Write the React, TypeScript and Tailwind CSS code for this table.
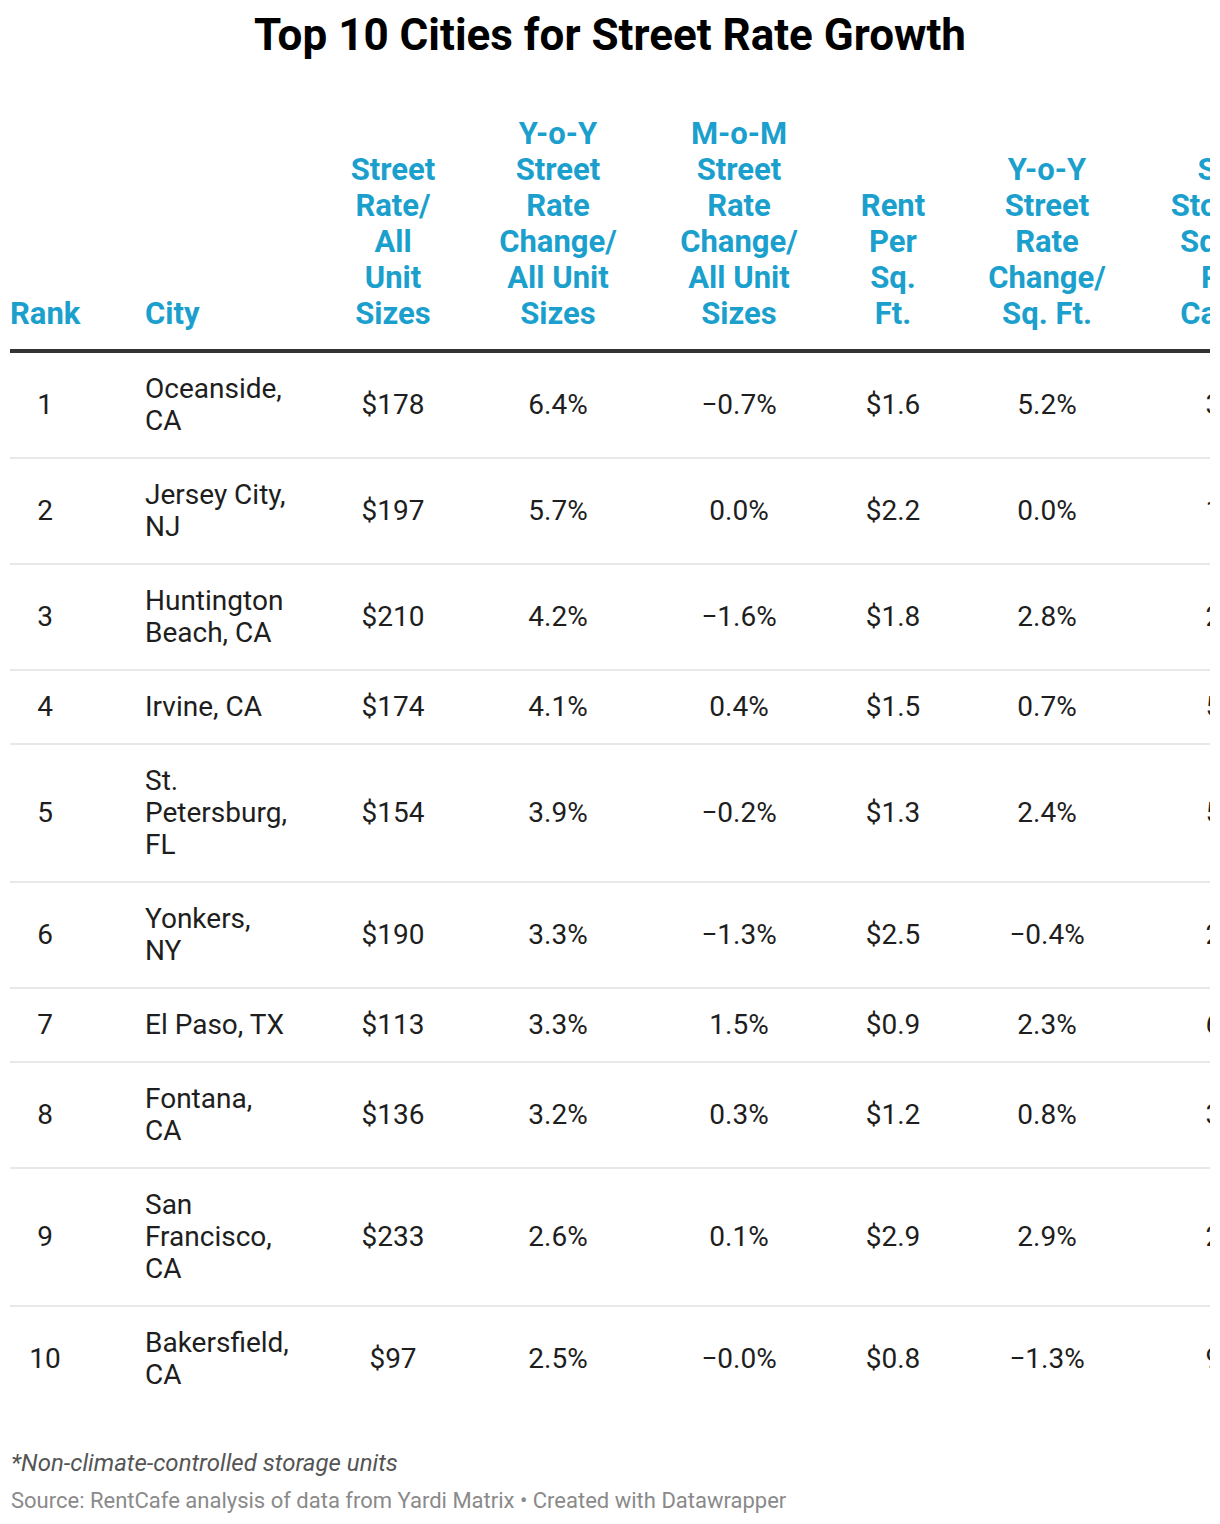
import React from "react";

const rows = [
  ["1", "Oceanside, CA", "$178", "6.4%", "\u22120.7%", "$1.6", "5.2%", "3.6"],
  ["2", "Jersey City, NJ", "$197", "5.7%", "0.0%", "$2.2", "0.0%", "1.4"],
  ["3", "Huntington Beach, CA", "$210", "4.2%", "\u22121.6%", "$1.8", "2.8%", "2.8"],
  ["4", "Irvine, CA", "$174", "4.1%", "0.4%", "$1.5", "0.7%", "5.2"],
  ["5", "St. Petersburg, FL", "$154", "3.9%", "\u22120.2%", "$1.3", "2.4%", "5.5"],
  ["6", "Yonkers, NY", "$190", "3.3%", "\u22121.3%", "$2.5", "\u22120.4%", "2.1"],
  ["7", "El Paso, TX", "$113", "3.3%", "1.5%", "$0.9", "2.3%", "6.3"],
  ["8", "Fontana, CA", "$136", "3.2%", "0.3%", "$1.2", "0.8%", "3.2"],
  ["9", "San Francisco, CA", "$233", "2.6%", "0.1%", "$2.9", "2.9%", "2.7"],
  ["10", "Bakersfield, CA", "$97", "2.5%", "\u22120.0%", "$0.8", "\u22121.3%", "9.4"],
];

const grid =
  "grid grid-cols-[70px_211px_204px_126px_236px_72px_236px_120px] w-[1275px]";

export default function App() {
  return (
    <div
      className="w-[1220px] bg-white text-[#1e1e1e]"
      style={{ fontFamily: "Roboto, 'Noto Sans', sans-serif" }}
    >
      <h1 className="pt-[9px] text-center text-[44px] font-bold leading-[53px] text-black">
        Top 10 Cities for Street Rate Growth
      </h1>
      <div className="mx-[10px] mt-[54px] overflow-hidden">
        {/* header */}
        <div
          className={`${grid} items-end border-b-4 border-[#333333] pb-[17px] text-[31px] font-bold leading-[36px] text-[#1b9fcd]`}
        >
          <div className="text-center">Rank</div>
          <div className="pl-[65px]">City</div>
          <div className="mx-auto w-[94px] text-center">Street Rate/ All Unit Sizes</div>
          <div className="mx-auto w-[126px] text-center">Y-o-Y Street Rate Change/ All Unit Sizes</div>
          <div className="mx-auto w-[126px] text-center">M-o-M Street Rate Change/ All Unit Sizes</div>
          <div className="mx-auto w-[72px] text-center">Rent Per Sq. Ft.</div>
          <div className="mx-auto w-[126px] text-center">Y-o-Y Street Rate Change/ Sq. Ft.</div>
          <div className="mx-auto w-[120px] text-center">Self Storage Sq. Ft. Per Capita</div>
        </div>
        {/* body */}
        {rows.map((r, i) => (
          <div
            key={r[0]}
            className={`${grid} items-center py-[20px] text-[28px] leading-[32px] ${
              i < rows.length - 1 ? "border-b-2 border-[#e8e8e8]" : ""
            }`}
          >
            <div className="text-center">{r[0]}</div>
            <div className="pl-[65px]">
              <div className="w-[147px]">{r[1]}</div>
            </div>
            <div className="text-center">{r[2]}</div>
            <div className="text-center">{r[3]}</div>
            <div className="text-center">{r[4]}</div>
            <div className="text-center">{r[5]}</div>
            <div className="text-center">{r[6]}</div>
            <div className="text-center">{r[7]}</div>
          </div>
        ))}
      </div>
      <div className="px-[11px] pt-[35px] pb-[10px]">
        <p className="text-[24px] italic leading-[34px] text-[#555555]">
          *Non-climate-controlled storage units
        </p>
        <p className="mt-[6px] text-[22px] leading-[30px] text-[#8a8a8a]">
          Source: RentCafe analysis of data from Yardi Matrix • Created with Datawrapper
        </p>
      </div>
    </div>
  );
}
